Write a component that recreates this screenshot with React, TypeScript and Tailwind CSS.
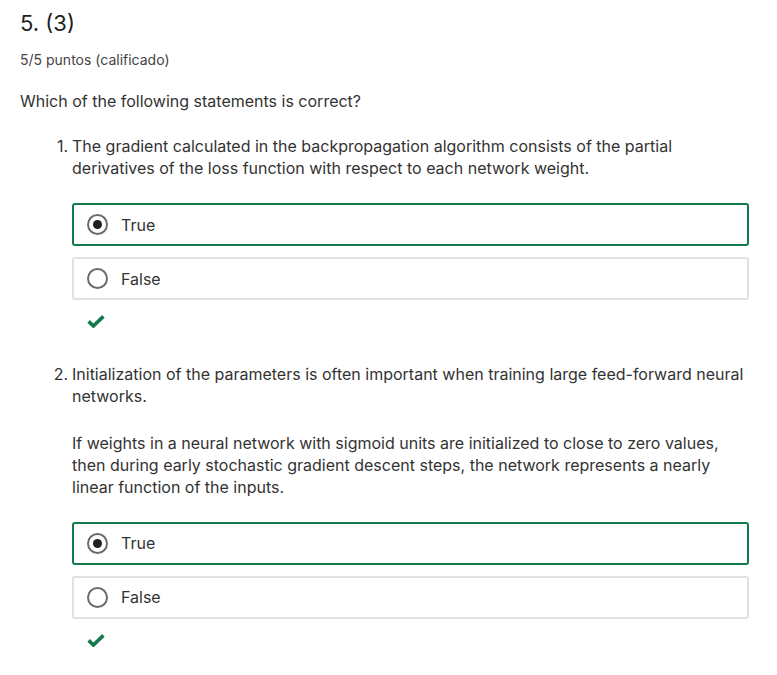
import React from "react";

function Radio({ checked }: { checked: boolean }) {
  return (
    <span className="flex h-[21px] w-[21px] flex-none items-center justify-center rounded-full border-2 border-[#6b6b6b] bg-white">
      {checked && <span className="block h-[9px] w-[9px] rounded-full bg-[#1f1f1f]" />}
    </span>
  );
}

function Option({ label, checked }: { label: string; checked: boolean }) {
  return (
    <div
      className={
        "flex h-[43px] items-center gap-[13px] rounded-[3px] border-2 pl-[13px] " +
        (checked ? "border-[#127a4b]" : "border-[#e1e1e1]")
      }
    >
      <Radio checked={checked} />
      <span className="text-[16px] leading-[22px] text-[#333]">{label}</span>
    </div>
  );
}

function Check() {
  return (
    <svg width="18" height="13" viewBox="0 0 18 13" className="ml-[15px] block">
      <path d="M1.6 6.4 L6.4 11 L16.4 1.4" fill="none" stroke="#127a4b" strokeWidth="3.6" strokeLinecap="butt" strokeLinejoin="miter" />
    </svg>
  );
}

function Item({ n, children, top }: { n: number; children: React.ReactNode; top: string }) {
  return (
    <div className={"flex " + top}>
      <span className="w-[52px] flex-none pr-[4px] text-right text-[16px] leading-[22px] text-[#333]">{n}.</span>
      <div className="min-w-0 flex-1">{children}</div>
    </div>
  );
}

export default function App() {
  return (
    <div className="min-h-[675px] bg-white pl-[20px] pr-[28px]" style={{ fontFamily: "Inter, 'Noto Sans', sans-serif" }}>
      <div className="pt-[8px] text-[22px] leading-[30px] text-[#1f1f1f]">5. (3)</div>
      <div className="mt-[12px] text-[14px] leading-[20px] text-[#444]">5/5 puntos (calificado)</div>
      <div className="mt-[19.5px] text-[16px] leading-[22px] text-[#333]">Which of the following statements is correct?</div>

      <Item n={1} top="mt-[23px]">
        <p className="text-[16px] leading-[22px] text-[#333]">
          The gradient calculated in the backpropagation algorithm consists of the partial derivatives of the loss function with respect to each network weight.
        </p>
        <div className="mt-[24.5px] flex flex-col gap-[11px]">
          <Option label="True" checked={true} />
          <Option label="False" checked={false} />
        </div>
        <div className="mt-[15px]">
          <Check />
        </div>
      </Item>

      <Item n={2} top="mt-[35px]">
        <p className="text-[16px] leading-[22px] text-[#333]">
          Initialization of the parameters is often important when training large feed-forward neural networks.
        </p>
        <p className="mt-[25px] text-[16px] leading-[22px] text-[#333]">
          If weights in a neural network with sigmoid units are initialized to close to zero values, then during early stochastic gradient descent steps, the network represents a nearly linear function of the inputs.
        </p>
        <div className="mt-[23.5px] flex flex-col gap-[11px]">
          <Option label="True" checked={true} />
          <Option label="False" checked={false} />
        </div>
        <div className="mt-[15px]">
          <Check />
        </div>
      </Item>
    </div>
  );
}
